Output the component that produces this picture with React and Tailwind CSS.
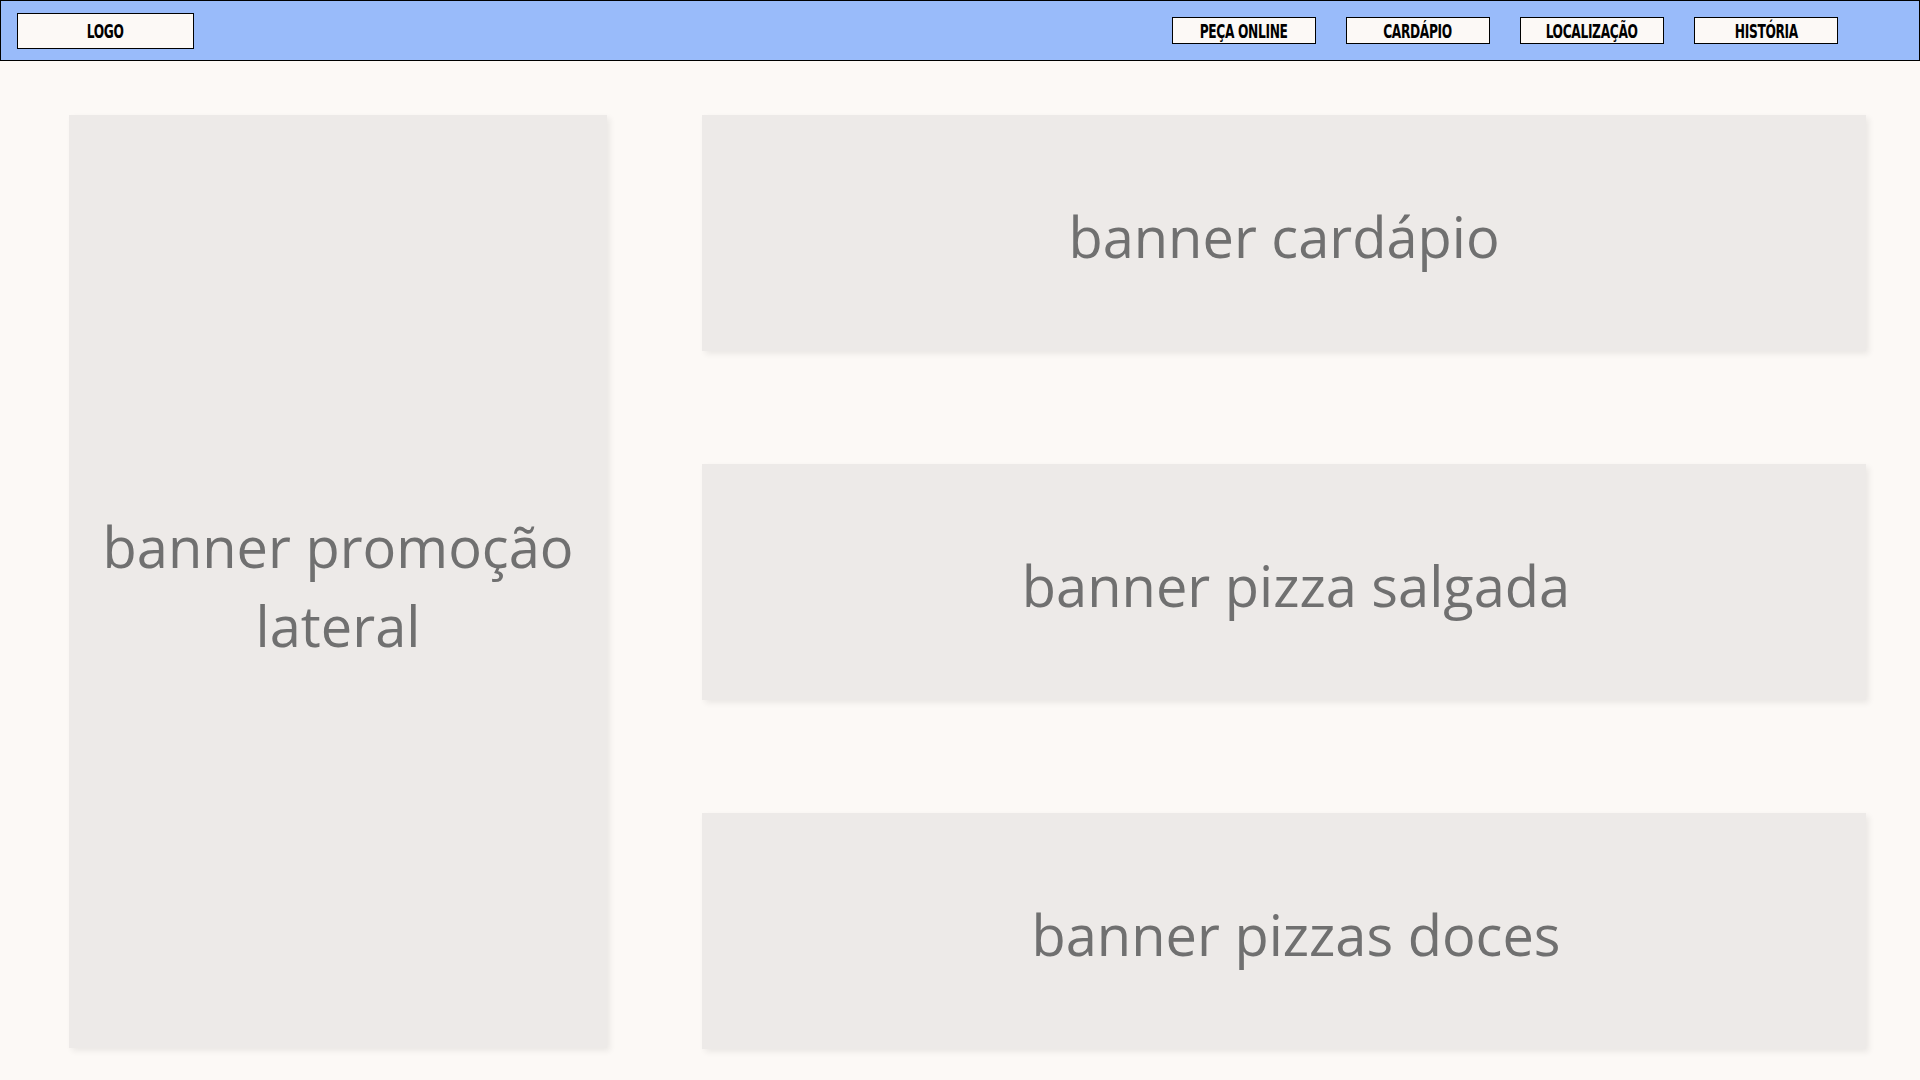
import React from "react";

const navItems = ["PEÇA ONLINE", "CARDÁPIO", "LOCALIZAÇÃO", "HISTÓRIA"];

const banners = [
  { label: "banner cardápio", offset: "pl-0" },
  { label: "banner pizza salgada", offset: "pl-[24px]" },
  { label: "banner pizzas doces", offset: "pl-[24px]" },
];

function NavLabel({ children }) {
  return (
    <span className="inline-block scale-x-[0.68] font-bold text-[20px] leading-none text-black tracking-tight [font-family:'Liberation_Sans_Narrow','DejaVu_Sans_Condensed',sans-serif]">
      {children}
    </span>
  );
}

export default function App() {
  return (
    <div className="min-h-screen w-full bg-[#fcf9f6] [font-family:'Open_Sans','Noto_Sans',sans-serif]">
      <header className="h-[61px] w-full border border-black bg-[#99bbfa] flex items-center justify-between pl-4 pr-[81px]">
        <div className="w-[177px] h-[36px] border border-black bg-[#fcf9f6] flex items-center justify-center">
          <NavLabel>LOGO</NavLabel>
        </div>
        <nav className="flex items-center gap-[30px]">
          {navItems.map((item) => (
            <button
              key={item}
              className="w-[144px] h-[27px] border border-black bg-[#fcf9f6] flex items-center justify-center overflow-hidden"
            >
              <NavLabel>{item}</NavLabel>
            </button>
          ))}
        </nav>
      </header>

      <main className="flex pl-[69px] pr-[54px] pt-[54px] pb-[32px] gap-[95px]">
        <div className="w-[538px] h-[933px] shrink-0 bg-[#edeae8] shadow-[3px_3px_6px_rgba(0,0,0,0.07)] flex items-center justify-center text-center">
          <p className="text-[56px] leading-[79px] text-[#707070] translate-y-[4px]">
            banner promoção
            <br />
            lateral
          </p>
        </div>
        <div className="flex-1 flex flex-col gap-[113px]">
          {banners.map((b) => (
            <div
              key={b.label}
              className={`h-[236px] bg-[#edeae8] shadow-[3px_3px_6px_rgba(0,0,0,0.07)] flex items-center justify-center ${b.offset}`}
            >
              <p className="text-[56px] text-[#707070] translate-y-[3px]">{b.label}</p>
            </div>
          ))}
        </div>
      </main>
    </div>
  );
}
